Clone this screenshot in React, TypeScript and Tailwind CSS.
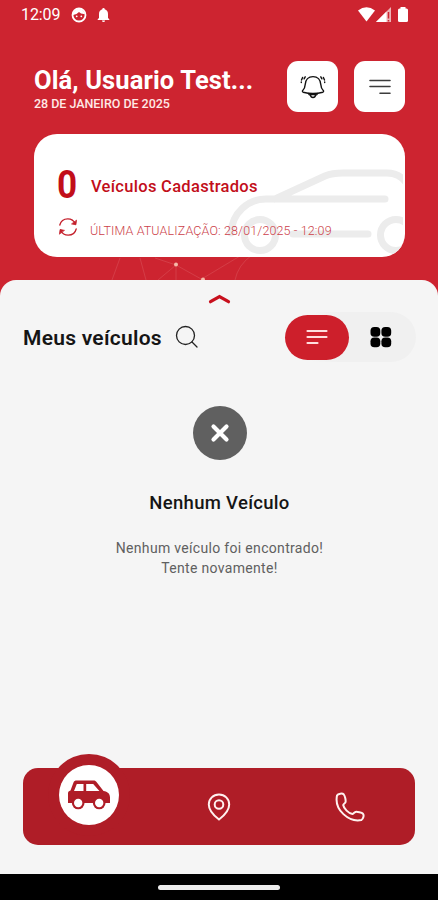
import { ReactNode } from 'react'

function StatusBar() {
  return (
    <div className="flex h-7 items-center pl-[21px] pr-[30px] pt-px text-white">
      <span className="w-[40px] text-[16px] leading-7 tracking-[-0.1px]">12:09</span>
      <svg className="ml-[10px]" width="16" height="16" viewBox="0 0 16 16">
        <circle cx="8" cy="8" r="6.5" fill="none" stroke="white" strokeWidth="1.8" />
        <path d="M2 6 Q5 1.5 8 2 Q12 2 14 7 Q10 7.5 8 5 Q6 7.5 2 8Z" fill="white" />
        <circle cx="5.7" cy="9.3" r="0.9" fill="white" />
        <circle cx="10.3" cy="9.3" r="0.9" fill="white" />
      </svg>
      <svg className="ml-[10px]" width="13" height="16" viewBox="0 0 13 16">
        <path d="M6.5 1a1.2 1.2 0 0 1 1.2 1.3C9.9 2.9 11 4.6 11 7v4l1.3 1.3V13H.7v-.7L2 11V7c0-2.4 1.1-4.1 3.3-4.7A1.2 1.2 0 0 1 6.5 1z" fill="white" />
        <path d="M5 13.6h3a1.5 1.5 0 0 1-3 0z" fill="white" />
      </svg>
      <svg className="ml-auto" width="50" height="16" viewBox="0 0 50 16">
        <path d="M0 3.5Q8.5-3 17 3.5L8.5 14.5z" fill="white" />
        <path d="M33 0V15H18z" fill="white" fillOpacity="0.65" />
        <path d="M28.5 4.5V15H18z" fill="white" />
        <path d="M30.5 5v6.5M30.5 13v1.5" stroke="#cd2430" strokeWidth="1.5" />
        <rect x="40" y="1.5" width="10" height="13.5" rx="1.5" fill="white" />
        <rect x="42.5" y="0" width="5" height="3" fill="white" />
      </svg>
    </div>
  )
}

function IconButton({ children }: { children: ReactNode }) {
  return (
    <button className="flex size-[51px] items-center justify-center rounded-[11px] bg-white">
      {children}
    </button>
  )
}

function Header() {
  return (
    <div className="mt-[33px] flex h-[51px] pl-[34px]">
      <div className="w-[253px]">
        <h1 className="mt-[4px] whitespace-nowrap text-[25.5px] font-bold leading-[30px] tracking-[0.12px] text-white">Olá, Usuario Test...</h1>
        <p className="mt-[1px] whitespace-nowrap text-[12.5px] font-medium leading-4 tracking-[-0.03px] text-[#ffe9e6]">28 DE JANEIRO DE 2025</p>
      </div>
      <div className="flex gap-4">
        <IconButton>
          <svg width="26" height="26" viewBox="0 0 26 26" fill="none" stroke="#111" strokeWidth="1.4" strokeLinecap="round" strokeLinejoin="round">
            <path d="M3.2 18.2c-1-.4-1-1.400-.3-2C4.700 14.500 5 13.500 5.200 10.500 5.500 5.800 8.500 2.600 13 2.600s7.500 3.200 7.800 7.900c.2 3 .5 4 2.300 5.700.7.600.7 1.600-.3 2-5.300 1.400-14.300 1.400-19.600 0z" />
            <path d="M8.500 19.500c.2 1.300 1 1.500 1.900 1.700.3 1.500 1.200 2.300 2.600 2.300s2.300-.8 2.600-2.300c.9-.2 1.700-.4 1.900-1.700M10.500 20.500h5" />
            <path d="M5.200 2.800 4.100 4.800M2.600 3.500 1.500 6M1.300 8v.6M20.800 2.800l1.100 2M23.400 3.500 24.500 6M24.700 8v.6" />
          </svg>
        </IconButton>
        <IconButton>
          <svg width="22" height="16" viewBox="0 0 22 16" stroke="#3c3c3c" strokeWidth="1.6" strokeLinecap="round">
            <path d="M1 1.500h20M1 7.500h20M11 14.200h10" />
          </svg>
        </IconButton>
      </div>
    </div>
  )
}

function SummaryCard() {
  return (
    <div className="relative ml-[34px] mt-[22px] h-[123px] w-[371px] overflow-hidden rounded-[23px] bg-white text-[#c20e1a]">
      <svg className="absolute left-[191px] top-[30px]" width="178" height="92" viewBox="0 0 178 92" fill="none" stroke="#ececec" strokeWidth="7" strokeLinecap="round" strokeLinejoin="round">
        <path d="M6 69C7 49 23 35 41 35H160M50 35 100 12C106 9.5 111 9 118 9H162C171 9 177 12 182 20M68 70H143" />
        <circle cx="35" cy="71" r="15.5" />
        <circle cx="171" cy="71" r="15.5" />
      </svg>
      <div className="relative flex h-[66px] items-end pl-[23px]">
        <span className="w-[34px] origin-left scale-x-90 text-[39px] font-bold leading-[29px]">0</span>
        <span className="whitespace-nowrap text-[16.5px] font-medium leading-[27px] tracking-[0.3px]">Veículos Cadastrados</span>
      </div>
      <div className="relative mt-[17px] flex h-[22px] items-center pl-[24px]">
        <svg className="-mt-[3px]" width="20" height="20" viewBox="0 0 20 20" fill="none" stroke="#c4202c" strokeWidth="1.3" strokeLinecap="round" strokeLinejoin="round">
          <path d="M1.800 8C2.700 4.300 5.800 1.800 9.800 1.800c3.400 0 6.200 2 7.500 5M18.200 12c-.9 3.700-4 6.200-8 6.200-3.400 0-6.200-2-7.500-5" />
          <path d="M18.500 3.500l-.6 4.300-4-.8zM1.500 16.800l.6-4.300 4 .8z" fill="#c4202c" strokeWidth="0.8" />
        </svg>
        <span className="ml-[12px] mt-[5px] whitespace-nowrap text-[12.5px] font-light leading-4 tracking-[0.13px] text-[#cc3f4a]">ÚLTIMA ATUALIZAÇÃO: 28/01/2025 - 12:09</span>
      </div>
    </div>
  )
}

function ListHeader() {
  return (
    <div className="mt-[8px] flex h-[50px] items-center pl-[23px] pr-[22px]">
      <h2 className="w-[152px] whitespace-nowrap pt-px text-[21px] font-semibold leading-6 tracking-[0.26px] text-[#151515]">Meus veículos</h2>
      <svg width="24" height="24" viewBox="0 0 24 24" fill="none" stroke="#222" strokeWidth="1.3" strokeLinecap="round">
        <circle cx="10.5" cy="10.5" r="9" />
        <path d="m17 17 5 5" />
      </svg>
      <div className="ml-auto flex h-[50px] w-[131px] items-center rounded-full bg-[linear-gradient(90deg,transparent_25px,#f0f0f0_55px)]">
        <button className="flex h-[45px] w-[64px] items-center justify-center rounded-full bg-[#cd1f2b]">
          <svg width="22" height="16" viewBox="0 0 22 16" stroke="#ffdede" strokeWidth="2.2" strokeLinecap="round">
            <path d="M1.5 2h19M1.5 8h19M1.5 14h10" />
          </svg>
        </button>
        <button className="flex flex-1 items-center justify-center pr-[4px]">
          <svg width="22" height="22" viewBox="0 0 22 22">
            <rect x="0.5" y="1" width="9.8" height="9.8" rx="3.8" />
            <rect x="11.4" y="1" width="9.8" height="9.8" rx="3.8" />
            <rect x="0.5" y="11.500" width="9.8" height="9.8" rx="3.8" />
            <rect x="11.4" y="11.500" width="9.8" height="9.8" rx="3.8" />
          </svg>
        </button>
      </div>
    </div>
  )
}

function EmptyState() {
  return (
    <div className="flex flex-col items-center pl-px pt-[44px] text-center">
      <div className="flex size-[54px] items-center justify-center rounded-full bg-[#606060]">
        <svg width="20" height="20" viewBox="0 0 20 20" stroke="white" strokeWidth="4.2" strokeLinecap="round">
          <path d="M3.5 3.5l13 13M16.5 3.5l-13 13" />
        </svg>
      </div>
      <h3 className="mt-[31px] text-[18.5px] font-medium leading-6 tracking-[0.3px] text-[#151515]">Nenhum Veículo</h3>
      <p className="mt-[23px] text-[14px] leading-5 tracking-[0.32px] text-[#606060]">
        Nenhum veículo foi encontrado!<br />Tente novamente!
      </p>
    </div>
  )
}

function BottomNav() {
  return (
    <nav className="relative mb-[29px] ml-[23px] mt-auto flex h-[77px] w-[392px] rounded-[15px] bg-[#af1d27]">
      {/* Active tab */}
      <div className="absolute left-[24.5px] top-[-14px] flex size-[82px] items-center justify-center rounded-full bg-[#af1d27]">
        <div className="flex size-[60px] items-center justify-center rounded-full bg-white">
          <svg width="42" height="30" viewBox="0 0 42 30">
            <path d="M8.800 0.500H25.500c1.300 0 2 .3 2.800 1.200L35.500 11c4.300.8 6.500 2.700 6.500 6.500v5.500H0V13.500c0-1.700.8-2.600 2.500-3L5.500 2.500C6.100 1 7 .5 8.800.5z" fill="#af1d27" />
            <path d="M8.800 4h6.700v7H6zM18.200 4h7l6.200 7H18.200z" fill="white" />
            <circle cx="10.2" cy="23" r="6.3" fill="#af1d27" />
            <circle cx="31.200" cy="23" r="6.3" fill="#af1d27" />
            <circle cx="10.2" cy="23" r="4.2" fill="white" />
            <circle cx="31.200" cy="23" r="4.2" fill="white" />
          </svg>
        </div>
      </div>
      <div className="flex-1" />
      <div className="flex flex-1 items-center justify-center pt-px">
        <svg width="24" height="28" viewBox="0 0 24 28" fill="none" stroke="#fff1ef" strokeWidth="2">
          <path d="M12 1.500C6.2 1.500 1.8 5.800 1.8 11.500 1.8 18.500 8 23.500 12 26.500 16 23.500 22.200 18.500 22.200 11.500 22.200 5.800 17.800 1.500 12 1.500z" />
          <circle cx="12" cy="11.5" r="4.3" />
        </svg>
      </div>
      <div className="flex flex-1 items-center justify-center pt-px">
        <svg width="30" height="30" viewBox="0 0 30 30" fill="none" stroke="#fff1ef" strokeWidth="2" strokeLinejoin="round">
          <path d="M2 3.500C3 1.500 7.500 1 8.800 2.500 10 4 11 8.500 10.500 10.200 10.200 11.300 8.300 11.700 8.200 13 8.800 16.500 13.500 21.500 17.500 22 19 21.800 19 20.200 20.500 19.900 22.200 19.700 26.800 20.500 28 21.800 29.300 23.300 28.200 27 26.500 28 14 30.500-1 18 2 3.500z" />
        </svg>
      </div>
    </nav>
  )
}

export default function App() {
  return (
    <div className="relative flex h-[900px] w-[438px] flex-col overflow-hidden bg-[#cd2430] font-['Roboto',sans-serif]">
      {/* Faint network lines behind the card */}
      <svg className="absolute left-[100px] top-[250px]" width="180" height="32" viewBox="0 0 180 32" fill="none" stroke="#f0a0a0" strokeOpacity="0.2">
        <path d="M20 8 12 30M40 8l6 22M55 8l21 7 27 15M76 15v15M76 15l-18 15M140 6 100 30M152 5q-14 10-17 25" />
        <circle cx="76" cy="14.5" r="2" fill="#f5b9a8" stroke="none" />
        <circle cx="103" cy="29.5" r="2" fill="#f5b9a8" stroke="none" />
      </svg>
      <StatusBar />
      <Header />
      <SummaryCard />
      <main className="relative mt-[23px] flex flex-1 flex-col rounded-t-[16px] bg-[#f5f5f5]">
        <svg className="mx-auto mt-[14px] shrink-0" width="24" height="10" viewBox="0 0 24 10" fill="none" stroke="#c8101d" strokeWidth="3.2" strokeLinecap="round">
          <path d="M3.500 7.700 12.500 2.500l9 5.200" />
        </svg>
        <ListHeader />
        <EmptyState />
        <BottomNav />
      </main>
      <div className="flex h-[26px] items-center justify-center bg-black">
        <div className="h-[5px] w-[122px] rounded-full bg-[#ededed]" />
      </div>
    </div>
  )
}
